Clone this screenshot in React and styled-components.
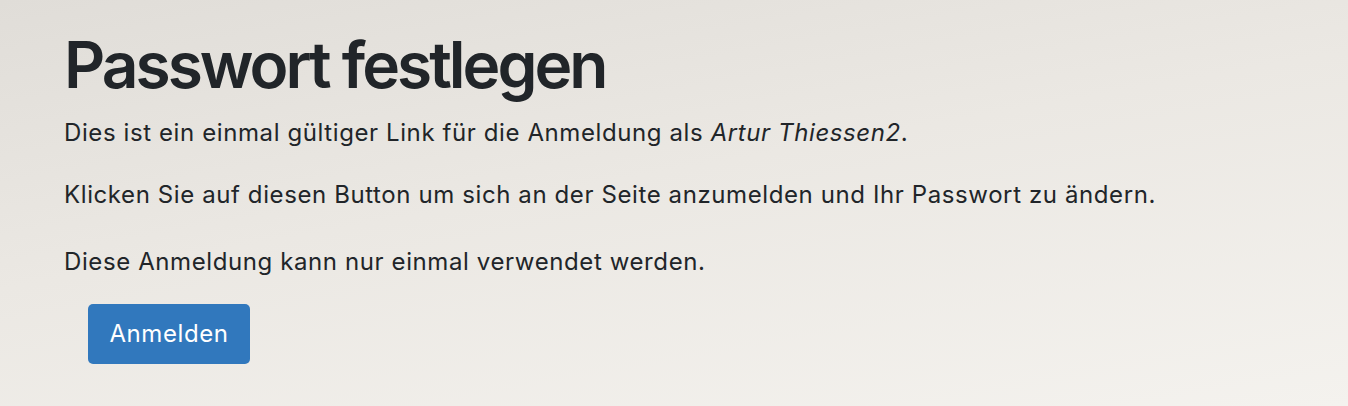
import React from 'react';
import styled, { createGlobalStyle } from 'styled-components';

const GlobalStyle = createGlobalStyle`
  html, body {
    margin: 0;
    padding: 0;
    height: 100%;
  }
  body {
    font-family: Inter, "Noto Sans", "Liberation Sans", sans-serif;
    color: #212529;
    background: linear-gradient(170deg, #e0ddd8 0%, #ebe8e3 45%, #f4f2ee 100%);
    min-height: 406px;
  }
`;

const Page = styled.main`
  padding: 27px 64px 0;
  min-height: 406px;
  box-sizing: border-box;
`;

const Title = styled.h1`
  margin: 0 0 12px;
  font-size: 64px;
  font-weight: 600;
  line-height: 1.2;
  letter-spacing: -3px;
`;

const Text = styled.p`
  margin: 0 0 ${(p) => p.$space || 31}px;
  font-size: 24px;
  line-height: 34px;
  letter-spacing: 0.6px;
`;

const Actions = styled.div`
  padding: 0 24px;
`;

const Button = styled.button`
  display: inline-flex;
  align-items: center;
  justify-content: center;
  width: 162px;
  height: 60px;
  border: none;
  border-radius: 5px;
  background: #3178bd;
  color: #ffffff;
  font-family: inherit;
  font-size: 24px;
  letter-spacing: 0.6px;
  cursor: pointer;
`;

export default function App() {
  return (
    <>
      <GlobalStyle />
      <Page>
        <Title>Passwort festlegen</Title>
        <Text $space={28}>
          Dies ist ein einmal gültiger Link für die Anmeldung als <em>Artur Thiessen2</em>.
        </Text>
        <Text $space={33}>Klicken Sie auf diesen Button um sich an der Seite anzumelden und Ihr Passwort zu ändern.</Text>
        <Text $space={25}>Diese Anmeldung kann nur einmal verwendet werden.</Text>
        <Actions>
          <Button type="button">Anmelden</Button>
        </Actions>
      </Page>
    </>
  );
}
